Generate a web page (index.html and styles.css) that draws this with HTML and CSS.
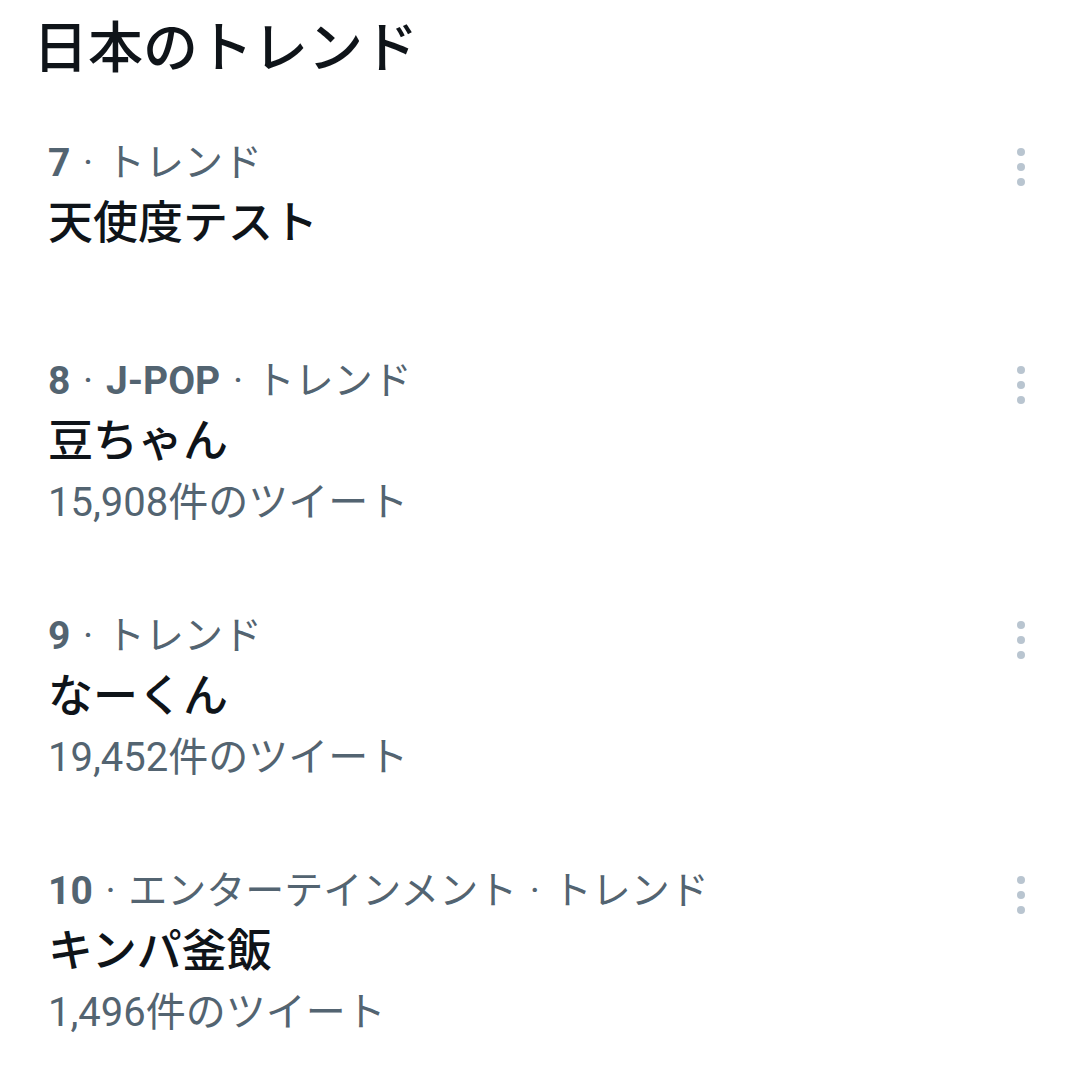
FILE: index.html
```html
<!DOCTYPE html>
<html lang="ja">
<head>
    <meta charset="UTF-8">
    <meta name="viewport" content="width=device-width, initial-scale=1.0">
    <title>日本のトレンド</title>
    <link rel="stylesheet" href="styles.css">
</head>
<body>
    <section class="trends">
        <h2 class="trends-title">日本のトレンド</h2>

        <div class="trend trend-no-count">
            <div class="trend-body">
                <div class="trend-meta"><b>7</b> · トレンド</div>
                <div class="trend-name">天使度テスト</div>
            </div>
            <button class="more" aria-label="その他"><span></span><span></span><span></span></button>
        </div>

        <div class="trend">
            <div class="trend-body">
                <div class="trend-meta"><b>8</b> · <b>J-POP</b> · トレンド</div>
                <div class="trend-name">豆ちゃん</div>
                <div class="trend-count">15,908件のツイート</div>
            </div>
            <button class="more" aria-label="その他"><span></span><span></span><span></span></button>
        </div>

        <div class="trend">
            <div class="trend-body">
                <div class="trend-meta"><b>9</b> · トレンド</div>
                <div class="trend-name">なーくん</div>
                <div class="trend-count">19,452件のツイート</div>
            </div>
            <button class="more" aria-label="その他"><span></span><span></span><span></span></button>
        </div>

        <div class="trend">
            <div class="trend-body">
                <div class="trend-meta"><b>10</b> · エンターテインメント · トレンド</div>
                <div class="trend-name">キンパ釜飯</div>
                <div class="trend-count">1,496件のツイート</div>
            </div>
            <button class="more" aria-label="その他"><span></span><span></span><span></span></button>
        </div>
    </section>
</body>
</html>
```

FILE: styles.css
```css
body {
    margin: 0;
    padding: 0;
    background: #fff;
    color: #0f1419;
    font-family: Roboto, "Noto Sans CJK JP", sans-serif;
}

.trends {
    padding: 15px 0 0;
}

.trends-title {
    margin: 0 0 14px;
    padding: 0 33px;
    font-size: 55px;
    font-weight: 500;
    line-height: 66px;
    color: #0f1419;
}

.trend {
    display: flex;
    align-items: flex-start;
    padding: 45px 51px 44px 48px;
}

/* trends without a tweet count keep some extra room below */
.trend-no-count {
    padding-bottom: 60px;
}

.trend-body {
    flex: 1;
}

.trend-meta {
    font-size: 39px;
    line-height: 46px;
    word-spacing: 3px;
    color: #536471;
}

.trend-meta b {
    font-weight: 700;
}

.trend-name {
    font-size: 45px;
    font-weight: 500;
    line-height: 58px;
    color: #0f1419;
    margin-top: 9px;
}

.trend-count {
    font-size: 40px;
    line-height: 42px;
    color: #536471;
    margin-top: 11px;
}

.more {
    display: flex;
    flex-direction: column;
    align-items: center;
    gap: 7px;
    padding: 0;
    margin-top: 8px;
    border: none;
    background: none;
    width: 16px;
}

.more span {
    width: 8px;
    height: 8px;
    border-radius: 50%;
    background: #b9c5d0;
}
```
